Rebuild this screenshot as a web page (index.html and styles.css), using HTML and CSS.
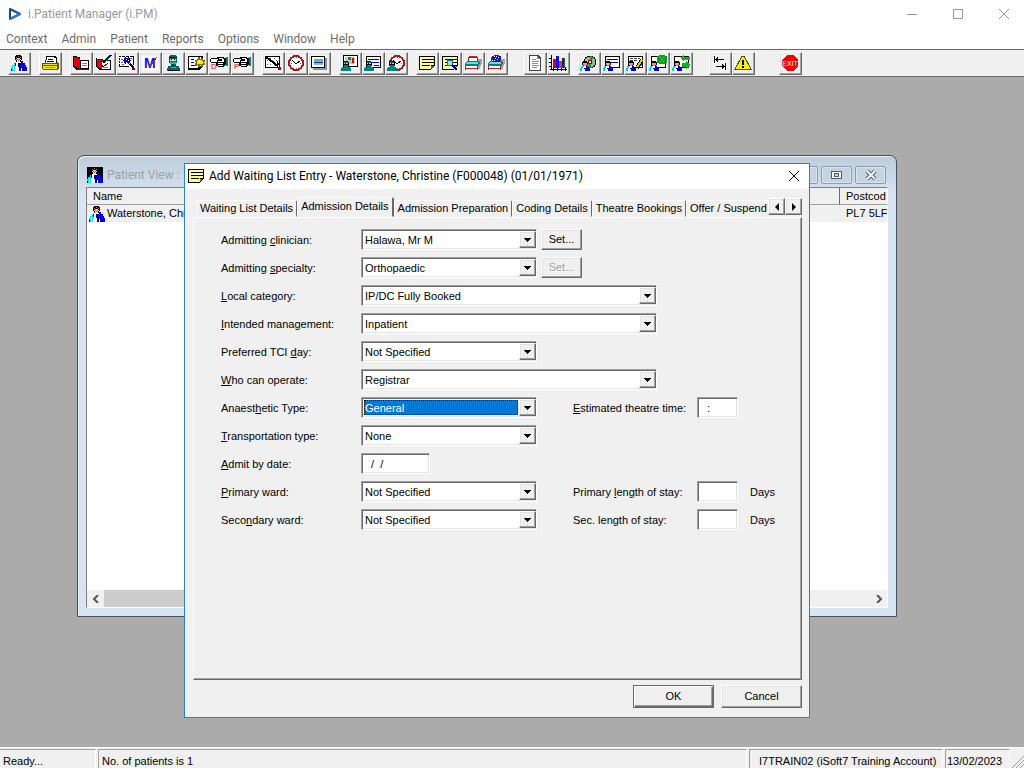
FILE: index.html
```html
<!DOCTYPE html>
<html lang="en">
<head>
  <meta charset="UTF-8">
  <meta name="viewport" content="width=device-width, initial-scale=1.0">
  <title>i.Patient Manager (i.PM)</title>
  <link rel="stylesheet" href="styles.css">
</head>
<body>
  <!-- Shared icon parts -->
  <svg class="sprite" aria-hidden="true">
    <symbol id="person" viewBox="0 0 16 16">
      <path fill="#000" d="M5 0h5v1h1v4h-1v2H9v1H6V7H5V5H4V1h1z"/>
      <path fill="#ffc0c0" d="M6 3h3v1h1v1H9v2H6V5H5V4h1z"/>
      <path fill="#c06060" d="M6 4h1v1H6zM8 4h1v1H8zM7 5h1v1H7zM7 1h1v1H7zM9 2h1v1H9zM5 2h1v1H5z"/>
      <path fill="#00e0ff" d="M3 8h2v2H4v6H0v-4h1v-2h2z"/>
      <path fill="#fff" d="M2 11h1v5H2zM5 7h5v3h1v6H4v-6h1z"/>
      <path fill="#0000e0" d="M10 6h2v2h2v2h1v2h1v4h-5v-3h-1v-2H9V8h1z"/>
      <path fill="#000080" d="M7 8h2v3h1v5H8v-4H7zM4 8h1v3H4zM12 9h1v2h-1zM0 14h1v2H0z"/>
    </symbol>
    <symbol id="clerk" viewBox="0 0 10 10">
      <path fill="#000" d="M3 0h4v1h1v3H7v1H3V4H2V1h1z"/>
      <path fill="#ff9090" d="M3 2h4v2H6v1H4V4H3z"/>
      <path fill="#00d0ff" d="M1 5h2v2H2v3H0V7h1z"/>
      <path fill="#fff" d="M3 5h3v5H2V7h1z"/>
      <path fill="#0000d0" d="M6 5h2v1h1v1h1v3H5V8H4V7h2z"/>
    </symbol>
    <symbol id="surgeon" viewBox="0 0 10 10">
      <path fill="#000" d="M3 0h4v1h1v4H7v1H3V5H2V1h1z"/>
      <path fill="#008080" d="M3 1h4v1H3zM3 4h4v2h2v1h1v3H0V7h1V6h2z"/>
      <path fill="#ffb0b0" d="M3 2h1v1H3zM5 2h2v1H5z"/>
    </symbol>
    <symbol id="card" viewBox="0 0 15 12">
      <path fill="#000" d="M0 0h15v12H0z"/>
      <path fill="#fff" d="M1 1h13v10H1z"/>
    </symbol>
    <symbol id="clock" viewBox="0 0 16 16">
      <circle cx="8" cy="8" r="7" fill="#fff" stroke="#b01818" stroke-width="2"/>
      <path fill="none" stroke="#000" d="M4 5l4 4 4-3"/>
      <path fill="#808080" d="M8 2h1v1H8zM8 13h1v1H8zM3 8h1v1H3zM12 8h1v1h-1z"/>
    </symbol>
    <symbol id="note" viewBox="0 0 16 14">
      <path fill="#000" d="M0 0h16v10h-1v1h-1v1h-1v1h-1v1H0z"/>
      <path fill="#ffff90" d="M1 1h14v8h-3v4H1z"/>
      <path fill="#000" d="M3 3h12v1H3zM3 6h12v1H3zM3 9h8v1H3z"/>
      <path fill="#808000" d="M12 10h2v1h-1v1h-1z"/>
    </symbol>
    <symbol id="hand" viewBox="0 0 18 16">
      <path fill="#000" d="M1 3h6V2h7v1h1v8h-1v1H8v-1H6V8H1V7H0V4h1z"/>
      <path fill="#fff" d="M1 4h7v1H7v2H1zM9 3h4v1H9zM8 6h5v1H8zM8 8h5v1H8zM8 10h5v1H8zM12 4h2v3h-2z"/>
      <path fill="#008080" d="M16 2h2v9h-2z"/>
      <path fill="#000" d="M15 3h1v7h-1z"/>
    </symbol>
    <symbol id="bed" viewBox="0 0 18 16">
      <path fill="#a0a0a0" d="M14 4h4v5h-1v2h-1v3h-2z"/>
      <path fill="#c02020" d="M5 1h8v1h1v4h-1V3H5v3H4V2h1zM1 10h1v3h11v-3h1v5h-1v-1H2v1H1z"/>
      <path fill="#fff" d="M5 3h8v3H5zM2 11h11v2H2z"/>
      <path fill="#008080" d="M3 6h12v1h1v2h-1v2H1V8h1V7h1z"/>
      <path fill="#60e0e0" d="M3 7h11v2H2V8h1z"/>
    </symbol>
    <symbol id="lens" viewBox="0 0 12 12">
      <circle cx="4" cy="4" r="3" fill="#80e8f8" stroke="#2070a0"/>
      <path stroke="#0000a0" stroke-width="2" d="M6 6l5 5"/>
    </symbol>
    <symbol id="drop" viewBox="0 0 15 15">
      <path d="M4 6h7v1h-1v1H9v1H8v1H7V9H6V8H5V7H4z"/>
    </symbol>
  </svg>

  <div class="app">
    <header class="titlebar">
      <svg class="logo" width="14" height="14" viewBox="0 0 14 14"><path d="M2 2v10l10-5z" fill="#fff" stroke="#164a86" stroke-width="2" stroke-linejoin="round"/><path d="M2 12l10-5" stroke="#2c7cb8" stroke-width="2"/></svg>
      <h1>i.Patient Manager (i.PM)</h1>
      <div class="window-controls">
        <button type="button" aria-label="Minimise"><svg width="12" height="12"><path d="M1 6.500h10"/></svg></button>
        <button type="button" aria-label="Maximise"><svg width="12" height="12"><path d="M1.500 1.500h9v9h-9z"/></svg></button>
        <button type="button" aria-label="Close"><svg width="12" height="12"><path d="M1 1l10 10M11 1L1 11"/></svg></button>
      </div>
    </header>

    <nav class="menubar">
      <a href="#">Context</a>
      <a href="#">Admin</a>
      <a href="#">Patient</a>
      <a href="#">Reports</a>
      <a href="#">Options</a>
      <a href="#">Window</a>
      <a href="#">Help</a>
    </nav>

    <div class="toolbar" role="toolbar" aria-label="Main tools">
      <div class="tool-group">
        <button type="button" aria-label="Patient"><svg viewBox="0 0 18 16"><use href="#person" x="1" width="16" height="16"/></svg></button>
      </div>
      <div class="tool-group">
        <button type="button" aria-label="Open folder"><svg viewBox="0 0 18 16">
          <path d="M5 1h9l2 2v6H4z" fill="#000"/><path d="M6 2h7v1h2v6H5z" fill="#fff"/>
          <path d="M7 4h5v1H7zM6 6h7v1H6z" fill="#000"/>
          <path d="M1 8h3V7h1v1h10V7h2v1h1v6h-1v1H2v-1H1z" fill="#605800"/>
          <path d="M2 9h14v1H2zM2 11h14v3H2z" fill="#f0e400"/><path d="M4 12h10v1H4z" fill="#b0a000"/>
        </svg></button>
      </div>
      <div class="tool-group">
        <button type="button" aria-label="Case notes"><svg viewBox="0 0 18 16">
          <path d="M1 1l7 1v3h9v10H4l-3-3z" fill="#000"/><path d="M2 2l6 2v10l-6-3z" fill="#e00010"/>
          <path d="M9 6h7v7H9z" fill="#fff"/><path d="M10 8h5v1h-5zM10 10h5v1h-5z" fill="#808080"/><path d="M5 14h11v1H5z" fill="#900"/>
        </svg></button>
        <button type="button" aria-label="Edit case notes"><svg viewBox="0 0 18 16">
          <path d="M1 3l5 2h10v10H4l-3-3z" fill="#000"/><path d="M2 4l5 2v8l-5-2z" fill="#e00010"/>
          <path d="M7 6h8v8H7z" fill="#fff"/><path d="M8 12h5v1H8z" fill="#808080"/>
          <path d="M8 8l8-8" stroke="#000" stroke-width="2"/><path d="M10 7l6-6" stroke="#008080"/><path d="M6 9l2 3 5-4" fill="none" stroke="#900"/><path d="M5 4h3v3H5z" fill="#900"/>
        </svg></button>
        <button type="button" aria-label="Find appointment"><svg viewBox="0 0 18 16">
          <path d="M1 1h16v12H1z" fill="#fff"/><path d="M1 1h2v1H1zM4 1h3v1H4zM8 1h3v1H8zM12 1h4v1h-4zM1 3h1v2H1zM1 6h1v2H1zM1 9h1v3H1zM2 11h9v1H2zM15 2h1v8h-1z" fill="#000"/>
          <path d="M3 4h2v1H3zM3 7h2v1H3zM4 9h2v1H4zM12 3h2v1h-2z" fill="#606060"/>
          <path d="M6 3h1V2h1v1h2V2h1v1h1v2h1v1h-1v2h-1v1h-1V8H8v1H7V8H6V6H5V5h1z" fill="#0000c0"/>
          <path d="M8 4h1v1H8zM10 5h1v1h-1zM8 7h1v1H8z" fill="#fff"/><path d="M12 9l4 4" stroke="#000080" stroke-width="2"/><path d="M14 13h3v2h-3z" fill="#900"/>
        </svg></button>
        <button type="button" aria-label="Maternity"><svg viewBox="0 0 18 16">
          <path d="M1 1h16v14H1z" fill="#fff"/>
          <text x="3" y="13" font-size="14" font-weight="bold" fill="#1010e0">M</text>
          <path d="M7 8l2 3 7-9" fill="none" stroke="#c01040" stroke-width="1"/>
        </svg></button>
        <button type="button" aria-label="Theatre"><svg viewBox="0 0 18 16">
          <path d="M6 0h6v1h1v7h-1v3h3v2h1v3H3v-3h1v-2h3V8H5V1h1z" fill="#006868"/>
          <path d="M6 4h6v2H6z" fill="#ffd0c0"/><path d="M7 4h1v1H7zM10 4h1v1h-1zM5 2h8v1H5zM7 10h4v1H7zM4 15h12v1H4z" fill="#000"/>
          <path d="M6 7h6v2H6zM7 12h5v1H7z" fill="#40a8a8"/>
        </svg></button>
        <button type="button" aria-label="New referral"><svg viewBox="0 0 18 16">
          <path d="M1 1h15v10l-4 4H1z" fill="#000"/><path d="M2 2h12v9h-3v2H2z" fill="#fff"/>
          <path d="M4 4h3v1H4zM4 7h3v1H4zM4 10h5v1H4z" fill="#000080"/>
          <path d="M11 2h1v2h2V3h1v2h2v1h-1v2h1v1h-2v2h-1V9h-2v2h-1V9H9v1H8V8h1V6H8V5h2V4h1z" fill="#f8e800" stroke="#807000"/><path d="M11 5h2v2h-2z" fill="#fff"/>
        </svg></button>
        <button type="button" aria-label="Discharge"><svg viewBox="0 0 18 16"><use href="#hand" width="18" height="16"/><text x="1" y="14" font-size="8" fill="#e00000">D</text></svg></button>
        <button type="button" aria-label="Pre-admission"><svg viewBox="0 0 18 16"><use href="#hand" width="18" height="16"/><text x="1" y="14" font-size="8" fill="#e00000">P</text></svg></button>
      </div>
      <div class="tool-group">
        <button type="button" aria-label="Write letter"><svg viewBox="0 0 18 16">
          <use href="#card" x="1" y="1" width="15" height="12"/>
          <path d="M3 5h1v1H3zM6 3h1v1H6zM10 3h1v1h-1zM3 9h1v1H3zM6 9h1v1H6zM12 5h1v1h-1zM8 5h1v1H8z" fill="#606060"/>
          <path d="M2 2l12 9" stroke="#000" stroke-width="2"/><path d="M10 9l3 2V6l3 6-1 2" fill="#fff" stroke="#000"/><path d="M14 12h3v3h-3z" fill="#900"/>
        </svg></button>
        <button type="button" aria-label="Clinic times"><svg viewBox="0 0 18 16"><use href="#clock" x="1" width="16" height="16"/></svg></button>
        <button type="button" aria-label="Session"><svg viewBox="0 0 18 16">
          <path d="M15 3h2v12H3v-2h12z" fill="#909090"/><path d="M1 1h14v12H1z" fill="#000"/><path d="M2 2h12v10H2z" fill="#fff"/>
          <path d="M4 4h9v2H4z" fill="#50c080"/><path d="M4 6h9v1H4z" fill="#20d8e8"/><path d="M4 7h9v1H4z" fill="#2020e0"/><path d="M4 8h9v2H4z" fill="#90c0c0"/>
        </svg></button>
      </div>
      <div class="tool-group">
        <button type="button" aria-label="Theatre picture"><svg viewBox="0 0 18 16"><use href="#card" x="2" y="0" width="15" height="12"/><path d="M4 2h10v7H4z" fill="#c8c8c8"/><path d="M11 3h2v5h-2z" fill="#e00000"/><path d="M7 2h3v3H7z" fill="#208020"/><use href="#surgeon" y="6" width="10" height="10"/></svg></button>
        <button type="button" aria-label="Theatre list"><svg viewBox="0 0 18 16"><use href="#card" x="2" y="1" width="15" height="12"/><path d="M4 4h11v1H4zM4 7h11v1H4zM10 10h5v1h-5z" fill="#0000c0"/><use href="#surgeon" y="6" width="10" height="10"/></svg></button>
        <button type="button" aria-label="Theatre times"><svg viewBox="0 0 18 16"><use href="#clock" x="2" width="16" height="16"/><use href="#surgeon" y="6" width="10" height="10"/></svg></button>
      </div>
      <div class="tool-group">
        <button type="button" aria-label="Waiting list"><svg viewBox="0 0 18 16"><use href="#note" x="1" y="1" width="16" height="14"/></svg></button>
        <button type="button" aria-label="Find waiting list entry"><svg viewBox="0 0 18 16"><use href="#note" x="1" y="1" width="16" height="14"/><use href="#lens" x="5" y="4" width="12" height="12"/></svg></button>
        <button type="button" aria-label="Beds"><svg viewBox="0 0 18 16"><use href="#bed" width="18" height="16"/></svg></button>
        <button type="button" aria-label="Occupied beds"><svg viewBox="0 0 18 16"><use href="#bed" width="18" height="16"/><path d="M7 0h5v1h2v4h-1v2H6V5H5V1h2z" fill="#1818b0"/><path d="M7 1h1v1H7zM9 1h1v1H9zM11 2h1v1h-1zM8 3h1v1H8zM10 4h1v1h-1zM7 5h1v1H7z" fill="#fff"/></svg></button>
      </div>
      <div class="tool-group wide">
        <button type="button" aria-label="Document"><svg viewBox="0 0 18 16"><path d="M3 0h9l3 3v13H3z" fill="#404040"/><path d="M4 1h7v3h3v11H4z" fill="#fff"/><path d="M11 1h1v2h2v1h-3zM6 4h4v1H6zM6 6h7v1H6zM6 8h6v1H6zM6 10h7v1H6zM6 12h5v1H6z" fill="#909090"/></svg></button>
        <button type="button" aria-label="Statistics"><svg viewBox="0 0 18 16"><path d="M2 0v14M1 14h17M0 3h2M0 7h2M0 11h2M4 12v4M8 12v4M12 12v4M16 12v4" stroke="#000"/><path d="M4 4h3v9H4z" fill="#d80020"/><path d="M7 1h3v12H7z" fill="#1010e0"/><path d="M10 6h3v7h-3z" fill="#c030c0"/><path d="M13 3h2v10h-2z" fill="#401070"/><path d="M15 3h1v10h-1z" fill="#108010"/></svg></button>
      </div>
      <div class="tool-group">
        <button type="button" aria-label="Patient disc"><svg viewBox="0 0 18 16"><circle cx="10" cy="7" r="6" fill="#90b898" stroke="#000"/><path d="M10 1v5l4-4zM10 8l-3 5h5z" fill="#209020"/><path d="M5 4l4 2-4 3z" fill="#d0d0a0"/><circle cx="10" cy="7" r="2" fill="#fff" stroke="#900"/><use href="#clerk" y="6" width="10" height="10"/></svg></button>
        <button type="button" aria-label="Patient card"><svg viewBox="0 0 18 16"><use href="#card" x="2" y="1" width="15" height="12"/><path d="M4 4h11v1H4zM4 7h11v1H4z" fill="#0000a0"/><use href="#clerk" y="6" width="10" height="10"/></svg></button>
        <button type="button" aria-label="Edit patient card"><svg viewBox="0 0 18 16"><use href="#card" x="2" y="1" width="15" height="12"/><path d="M4 3h3v1H4zM8 3h3v1H8zM4 5h3v1H4zM8 5h3v1H8zM12 3h2v1h-2z" fill="#404040"/><use href="#clerk" y="6" width="10" height="10"/><path d="M11 13l5-8" stroke="#000" stroke-width="4"/><path d="M11 12l5-7" stroke="#e8c800" stroke-width="2"/></svg></button>
        <button type="button" aria-label="Activate patient"><svg viewBox="0 0 18 16"><use href="#card" x="2" y="1" width="15" height="12"/><path d="M10 0h6v1h2v7h-2v1h-6V8H8V1h2z" fill="#10a020"/><path d="M11 2h1v1h-1zM14 2h1v1h-1zM11 6h1v1h-1zM14 6h1v1h-1zM12 4h2v1h-2z" fill="#50d050"/><use href="#clerk" y="6" width="10" height="10"/></svg></button>
        <button type="button" aria-label="Transfer patient"><svg viewBox="0 0 18 16"><use href="#card" x="2" y="1" width="15" height="12"/><path d="M8 3l4-3v2h6v3h-6v2zM18 10l-4-4v2h-4v4h4v2z" fill="#10b020"/><use href="#clerk" y="6" width="10" height="10"/></svg></button>
      </div>
      <div class="tool-group wide">
        <button type="button" aria-label="Switch"><svg viewBox="0 0 18 16"><path d="M3 1h1v7H3zM4 4h9v1H4zM5 3h1v3H5zM6 2h1v5H6zM14 8h1v7h-1zM5 11h9v1H5zM12 10h1v3h-1zM11 9h1v5h-1z"/></svg></button>
        <button type="button" aria-label="Alerts"><svg viewBox="0 0 18 16"><path d="M10 1l8 14H3z" fill="#909090"/><path d="M8 1h2l7 13H1z" fill="#f8f000" stroke="#505000"/><path d="M8 5h2v5H8zM8 11h2v2H8z" fill="#000"/></svg></button>
      </div>
      <div class="tool-group exit">
        <button type="button" aria-label="Exit"><svg viewBox="0 0 18 16"><path d="M6 0h6l5 5v6l-5 5H6l-5-5V5z" fill="#f00000"/><text x="9" y="11" text-anchor="middle" font-size="7" fill="#fff">EXIT</text></svg></button>
      </div>
    </div>

    <main class="desktop">
      <!-- Patient list -->
      <section class="patient-window" aria-label="Patient View">
        <div class="patient-title">
          <span class="patient-icon"><svg width="16" height="16"><use href="#person"/></svg></span>
          <h2>Patient View :</h2>
          <div class="frame-buttons">
            <button type="button" aria-label="Minimise window"></button>
            <button type="button" aria-label="Restore window"><svg width="11" height="8"><path d="M0 0h11v8H0z" fill="#555b66"/><path d="M1 1h9v6H1z" fill="#fff"/><path d="M3 2h5v4H3z" fill="#555b66"/><path d="M4 3h3v2H4z" fill="#c6d3e2"/></svg></button>
            <button type="button" aria-label="Close window"><svg width="12" height="10"><path d="M2 1l8 8M10 1L2 9" stroke="#555b66" stroke-width="4"/><path d="M2 1l8 8M10 1L2 9" stroke="#fff" stroke-width="2"/></svg></button>
          </div>
        </div>
        <div class="patient-list">
          <table>
            <thead>
              <tr><th class="name-col">Name</th><th>Postcod</th></tr>
            </thead>
            <tbody>
              <tr><td><span class="name-cell"><svg width="16" height="16"><use href="#person"/></svg>Waterstone, Christine</span></td><td>PL7 5LF</td></tr>
            </tbody>
          </table>
          <div class="scrollbar">
            <button type="button" aria-label="Scroll left"><svg width="8" height="8"><path d="M6 0L2 4l4 4"/></svg></button>
            <span class="thumb"></span>
            <button type="button" aria-label="Scroll right"><svg width="8" height="8"><path d="M2 0l4 4-4 4"/></svg></button>
          </div>
        </div>
      </section>

      <!-- Waiting list dialog -->
      <section class="dialog" role="dialog" aria-labelledby="dialog-title">
        <div class="dialog-title">
          <svg width="16" height="14"><use href="#note"/></svg>
          <h2 id="dialog-title">Add Waiting List Entry - Waterstone, Christine (F000048) (01/01/1971)</h2>
          <button type="button" class="close" aria-label="Close"><svg width="12" height="12"><path d="M1 1l10 10M11 1L1 11"/></svg></button>
        </div>

        <div class="tab-row">
          <div class="tabs" role="tablist">
            <button type="button" role="tab">Waiting List Details</button>
            <button type="button" role="tab" class="active" aria-selected="true">Admission Details</button>
            <button type="button" role="tab">Admission Preparation</button>
            <button type="button" role="tab">Coding Details</button>
            <button type="button" role="tab">Theatre Bookings</button>
            <button type="button" role="tab">Offer / Suspend</button>
          </div>
          <div class="tab-scroll">
            <button type="button" aria-label="Previous tabs"><svg width="4" height="8"><path d="M4 0v8L0 4z"/></svg></button>
            <button type="button" aria-label="Next tabs"><svg width="4" height="8"><path d="M0 0v8l4-4z"/></svg></button>
          </div>
        </div>

        <form class="panel" id="admission">
          <div class="row">
            <label for="clinician">Admitting <u>c</u>linician:</label>
            <span class="combo"><select id="clinician"><option>Halawa, Mr M</option></select><svg class="arrow"><use href="#drop"/></svg></span>
            <button type="button" class="button set">Set...</button>
          </div>
          <div class="row">
            <label for="specialty">Admitting <u>s</u>pecialty:</label>
            <span class="combo"><select id="specialty"><option>Orthopaedic</option></select><svg class="arrow"><use href="#drop"/></svg></span>
            <button type="button" class="button set" disabled>Set...</button>
          </div>
          <div class="row">
            <label for="category"><u>L</u>ocal category:</label>
            <span class="combo long"><select id="category"><option>IP/DC Fully Booked</option></select><svg class="arrow"><use href="#drop"/></svg></span>
          </div>
          <div class="row">
            <label for="management"><u>I</u>ntended management:</label>
            <span class="combo long"><select id="management"><option>Inpatient</option></select><svg class="arrow"><use href="#drop"/></svg></span>
          </div>
          <div class="row">
            <label for="tci">Preferred TCI <u>d</u>ay:</label>
            <span class="combo"><select id="tci"><option>Not Specified</option></select><svg class="arrow"><use href="#drop"/></svg></span>
          </div>
          <div class="row">
            <label for="operate"><u>W</u>ho can operate:</label>
            <span class="combo long"><select id="operate"><option>Registrar</option></select><svg class="arrow"><use href="#drop"/></svg></span>
          </div>
          <div class="row">
            <label for="anaesthetic">Anaest<u>h</u>etic Type:</label>
            <span class="combo selected"><select id="anaesthetic"><option>General</option></select><svg class="arrow"><use href="#drop"/></svg></span>
            <label for="theatre-time" class="second"><u>E</u>stimated theatre time:</label>
            <input type="text" id="theatre-time" value="  :">
          </div>
          <div class="row">
            <label for="transport"><u>T</u>ransportation type:</label>
            <span class="combo"><select id="transport"><option>None</option></select><svg class="arrow"><use href="#drop"/></svg></span>
          </div>
          <div class="row">
            <label for="admit-date"><u>A</u>dmit by date:</label>
            <input type="text" id="admit-date" class="date" value="  /  /">
          </div>
          <div class="row">
            <label for="primary-ward"><u>P</u>rimary ward:</label>
            <span class="combo"><select id="primary-ward"><option>Not Specified</option></select><svg class="arrow"><use href="#drop"/></svg></span>
            <label for="primary-stay" class="second">Primary <u>l</u>ength of stay:</label>
            <input type="text" id="primary-stay">
            <span class="unit">Days</span>
          </div>
          <div class="row">
            <label for="secondary-ward">Seco<u>n</u>dary ward:</label>
            <span class="combo"><select id="secondary-ward"><option>Not Specified</option></select><svg class="arrow"><use href="#drop"/></svg></span>
            <label for="secondary-stay" class="second">Sec. length of stay:</label>
            <input type="text" id="secondary-stay">
            <span class="unit">Days</span>
          </div>
        </form>

        <div class="actions">
          <button type="submit" form="admission" class="button default">OK</button>
          <button type="button" class="button">Cancel</button>
        </div>
      </section>
    </main>

    <footer class="statusbar">
      <span class="ready">Ready...</span>
      <span class="count">No. of patients is 1</span>
      <span class="account">I7TRAIN02 (iSoft7 Training Account)</span>
      <span class="date-cell">13/02/2023</span>
      <svg width="12" height="12"><path d="M0 12L12 0M4 12l8-8M8 12l4-4" stroke="#a0a0a0"/></svg>
    </footer>
  </div>
</body>
</html>
```
FILE: styles.css
```css
* {
  box-sizing: border-box;
}

body {
  margin: 0;
  font-family: "Liberation Sans", Arial, sans-serif;
  font-size: 11px;
  line-height: 13px;
  color: #000;
}

h1,
h2 {
  margin: 0;
  font-weight: normal;
  white-space: nowrap;
}

button,
input,
select {
  font: inherit;
  color: inherit;
  border-radius: 0;
  margin: 0;
  padding: 0;
}

svg {
  display: block;
  flex: none;
}

.sprite {
  position: absolute;
  width: 0;
  height: 0;
}

.app {
  display: flex;
  flex-direction: column;
  height: 100vh;
  overflow: hidden;
}

/* Title and menu */
.titlebar {
  display: flex;
  align-items: center;
  height: 27px;
  padding-left: 8px;
  background: #fff;
  color: #999;
}

h1,
.dialog-title h2,
.patient-title h2,
.menubar {
  font-family: Roboto, "Segoe UI", sans-serif;
  font-size: 12px;
  line-height: 16px;
}

h1 {
  flex: 1;
  margin-left: 6px;
}

.window-controls {
  display: flex;
  gap: 6px;
}

.window-controls button {
  display: flex;
  justify-content: center;
  align-items: center;
  width: 40px;
  height: 26px;
  border: none;
  background: none;
}

.window-controls path {
  fill: none;
  stroke: #999;
}

.menubar {
  display: flex;
  gap: 14px;
  height: 22px;
  padding: 4px 6px 0;
  background: #fff;
}

.menubar a {
  color: #6d6d6d;
  text-decoration: none;
}

/* Toolbar */
.toolbar {
  display: flex;
  gap: 8px;
  height: 28px;
  padding: 2px 8px 0;
  background: #f0f0f0;
  border-top: 1px solid #696969;
  border-bottom: 1px solid #696969;
}

.tool-group {
  display: flex;
}

.tool-group.wide {
  margin-left: 8px;
}

.tool-group.exit {
  margin-left: 16px;
}

.toolbar button,
.tab-scroll button,
.button,
.arrow {
  background: #f0f0f0;
  border: 1px solid;
  border-color: #fff #696969 #696969 #fff;
  box-shadow: inset -1px -1px #a0a0a0, inset 1px 1px #e3e3e3;
}

.toolbar button {
  display: flex;
  align-items: flex-start;
  width: 23px;
  height: 23px;
  padding: 2px 1px;
}

.toolbar svg {
  width: 18px;
  height: 16px;
  shape-rendering: crispEdges;
}

/* Desktop */
.desktop {
  position: relative;
  flex: 1;
  min-height: 0;
  overflow: hidden;
  background: #ababab;
}

.patient-window {
  position: absolute;
  left: 77px;
  top: 78px;
  width: 820px;
  padding: 0 8px 8px;
  background: linear-gradient(#bfcddb, #d7e4f2 40px);
  border: 1px solid #4a4f57;
  border-radius: 7px 7px 0 0;
  box-shadow: inset 1px 1px #e8f0f8;
}

.patient-title {
  display: flex;
  align-items: center;
  height: 31px;
  padding: 6px 2px 0 1px;
}

.patient-title h2 {
  flex: 1;
  margin-left: 4px;
  color: #9aa1a8;
}

.patient-icon {
  background: #000;
}

.frame-buttons {
  display: flex;
  gap: 3px;
}

.frame-buttons button {
  display: flex;
  justify-content: center;
  align-items: center;
  width: 31px;
  height: 18px;
  border: 1px solid #8d9bb0;
  border-radius: 2px;
  background: #c6d3e2;
  box-shadow: inset 0 0 0 1px #d9e4f0;
}

.patient-list {
  display: flex;
  flex-direction: column;
  height: 421px;
  border: 1px solid;
  border-color: #808080 #fff #fff #808080;
  background: #fff;
}

table {
  width: 100%;
  table-layout: fixed;
  border-collapse: separate;
  border-spacing: 0;
}

th,
td {
  height: 17px;
  padding: 0 0 0 6px;
  overflow: hidden;
  background: #f0f0f0;
  font-weight: normal;
  text-align: left;
  white-space: nowrap;
}

th {
  border-bottom: 1px solid #a0a0a0;
}

.name-col {
  width: 753px;
  border-right: 1px solid #696969;
}

td:first-child {
  padding-left: 2px;
}

.name-cell {
  display: flex;
  align-items: center;
  gap: 2px;
}

.scrollbar {
  display: flex;
  height: 17px;
  margin-top: auto;
  background: #f0f0f0;
}

.scrollbar button {
  display: flex;
  justify-content: center;
  align-items: center;
  width: 17px;
  border: none;
  background: none;
}

.scrollbar path {
  fill: none;
  stroke: #555;
  stroke-width: 2;
}

.thumb {
  width: 500px;
  margin-right: auto;
  background: #cdcdcd;
}

/* Dialog */
.dialog {
  position: absolute;
  left: 184px;
  top: 86px;
  width: 626px;
  padding: 0 7px 9px 8px;
  background: #f0f0f0;
  border: 1px solid #2585bd;
}

.dialog-title {
  display: flex;
  align-items: center;
  height: 25px;
  margin: 0 -7px 0 -8px;
  padding: 0 9px 2px 3px;
  background: #fff;
}

.dialog-title h2 {
  flex: 1;
  margin-left: 5px;
}

.close {
  border: none;
  background: none;
}

.close path {
  stroke: #000;
}

.tab-row {
  display: flex;
  padding: 8px 0 0 3px;
}

.tabs {
  display: flex;
  flex: 1;
  align-items: flex-end;
  min-width: 0;
  height: 20px;
  overflow: hidden;
}

.tabs button {
  flex: none;
  height: 17px;
  padding: 0 3px;
  border: 1px solid;
  border-color: #fff #696969 transparent #fff;
  border-radius: 2px 2px 0 0;
  background: #f0f0f0;
  white-space: nowrap;
}

.tabs .active {
  height: 20px;
  padding-bottom: 2px;
  border-right-width: 2px;
}

.tab-scroll {
  display: flex;
  padding-top: 1px;
}

.tab-scroll button {
  display: flex;
  justify-content: center;
  align-items: center;
  width: 17px;
  height: 17px;
}

.panel {
  display: flex;
  flex-direction: column;
  gap: 7px;
  min-height: 463px;
  padding: 11px 20px 11px 27px;
  border: 1px solid;
  border-color: #fff #696969 #696969 #fff;
  box-shadow: inset -1px -1px #a0a0a0;
}

.row {
  display: flex;
  align-items: center;
  height: 21px;
}

.row label,
.unit {
  padding-top: 2px;
  white-space: nowrap;
}

.row label {
  width: 140px;
}

.row .second {
  width: 124px;
  margin-left: 36px;
}

.combo,
.row input {
  height: 21px;
  background: #fff;
  border: 1px solid;
  border-color: #a0a0a0 #fff #fff #a0a0a0;
  box-shadow: inset 1px 1px #696969, inset -1px -1px #e3e3e3;
}

.combo {
  display: grid;
  width: 176px;
  padding: 1px 0 1px 1px;
}

.combo.long {
  width: 296px;
}

.combo select,
.combo .arrow,
.combo.selected::before {
  grid-area: 1 / 1;
}

.combo select {
  appearance: none;
  width: 100%;
  height: 17px;
  padding: 1px 17px 0 2px;
  border: none;
  background: none;
  outline: none;
}

.arrow {
  justify-self: end;
  width: 17px;
  height: 17px;
  pointer-events: none;
}

.combo.selected::before {
  content: "";
  margin: 1px 18px 1px 1px;
  border: 1px dotted #000;
  background: #0078d7;
}

.combo.selected select {
  position: relative;
  color: #fff;
}

.row input {
  width: 41px;
  padding: 0 3px;
  white-space: pre;
}

.row .date {
  width: 69px;
}

.button {
  width: 81px;
  height: 23px;
}

.set {
  width: 41px;
  height: 21px;
  margin-left: 4px;
}

.button:disabled {
  color: #a0a0a0;
  text-shadow: 1px 1px #fff;
}

.default {
  border-color: #696969;
  box-shadow: inset 1px 1px #fff, inset -1px -1px #696969, inset -2px -2px #a0a0a0;
}

.unit {
  margin-left: 12px;
}

.actions {
  display: flex;
  justify-content: flex-end;
  gap: 7px;
  padding-top: 5px;
}

/* Status bar */
.statusbar {
  display: flex;
  align-items: flex-end;
  gap: 2px;
  height: 21px;
  background: #f0f0f0;
  border-top: 1px solid #fff;
}

.statusbar span {
  height: 19px;
  padding: 5px 3px 0;
  border: solid #a0a0a0;
  border-width: 1px 0 0 1px;
  border-right: 1px solid #fff;
  white-space: nowrap;
  line-height: 13px;
}

.statusbar .ready {
  width: 96px;
  border-left: none;
}

.statusbar .count {
  flex: 1;
}

.statusbar .account {
  width: 194px;
  padding-left: 9px;
}

.statusbar .date-cell {
  width: 65px;
  padding: 5px 0 0 1px;
}
```
